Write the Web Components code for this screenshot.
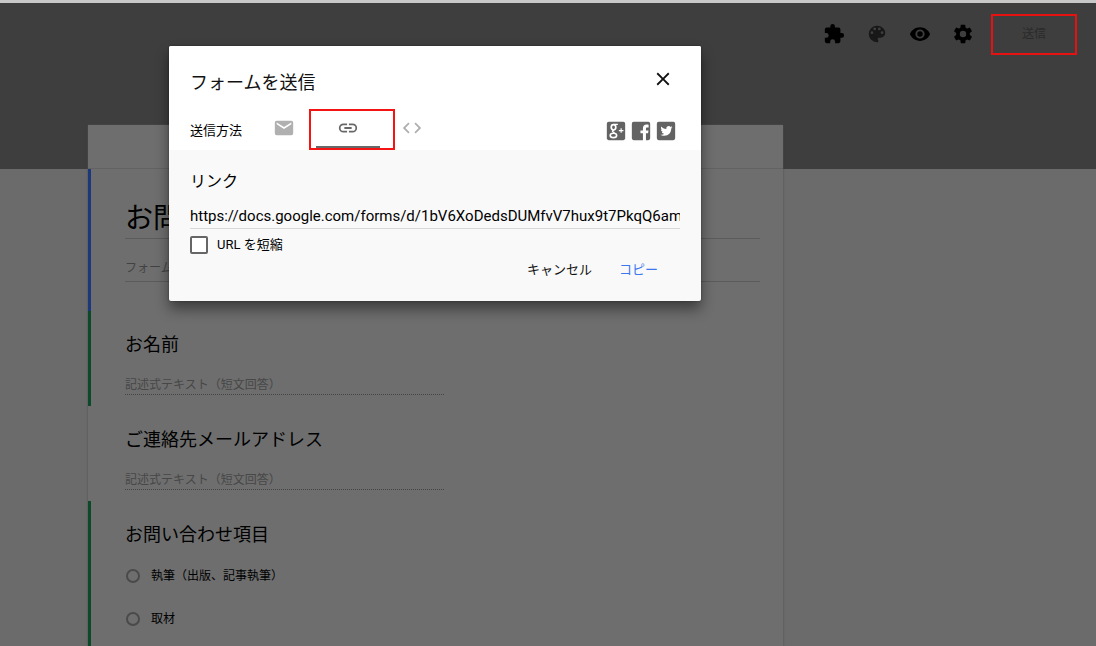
<!DOCTYPE html>
<html lang="ja">
<head>
<meta charset="utf-8">
<meta name="viewport" content="width=device-width, initial-scale=1">
<title>フォームを送信</title>
<style>
html, body { margin: 0; height: 100%; }
body { background: #6b6b6b; color: #000; font: 13px/20px Roboto, "Noto Sans CJK JP", sans-serif; overflow: hidden; }
</style>
</head>
<body>
<form-app></form-app>
<script>
const ICONS = {
  extension: '<path d="M20.5 11H19V7a2 2 0 0 0-2-2h-4V3.500a2.500 2.500 0 0 0-5 0V5H4a2 2 0 0 0-2 2v3.800h1.500a2.700 2.700 0 0 1 0 5.400H2V20a2 2 0 0 0 2 2h3.800v-1.500a2.700 2.700 0 0 1 5.400 0V22H17a2 2 0 0 0 2-2v-4h1.500a2.500 2.500 0 0 0 0-5z"/>',
  palette: '<path d="M12 3a9 9 0 0 0 0 18c.83 0 1.500-.67 1.500-1.500 0-.39-.15-.74-.39-1.010-.23-.26-.38-.61-.38-.99 0-.83.67-1.500 1.500-1.500H16a5 5 0 0 0 5-5c0-4.420-4.030-8-9-8zm-5.500 9a1.500 1.500 0 1 1 0-3 1.500 1.500 0 0 1 0 3zm3-4a1.500 1.500 0 1 1 0-3 1.500 1.500 0 0 1 0 3zm5 0a1.500 1.500 0 1 1 0-3 1.500 1.500 0 0 1 0 3zm3 4a1.500 1.500 0 1 1 0-3 1.500 1.500 0 0 1 0 3z"/>',
  eye: '<path d="M12 4.500C7 4.500 2.730 7.610 1 12c1.730 4.390 6 7.500 11 7.500s9.270-3.110 11-7.500c-1.730-4.390-6-7.500-11-7.500zM12 17a5 5 0 1 1 0-10 5 5 0 0 1 0 10zm0-8a3 3 0 1 0 0 6 3 3 0 0 0 0-6z"/>',
  gear: '<path d="M19.430 12.980c.04-.32.07-.64.07-.98s-.03-.66-.07-.98l2.110-1.650c.19-.15.24-.42.12-.64l-2-3.460c-.12-.22-.39-.3-.61-.22l-2.490 1c-.52-.4-1.080-.73-1.690-.98l-.38-2.650A.488.488 0 0 0 14 2h-4c-.25 0-.46.18-.49.42l-.38 2.650c-.61.25-1.170.59-1.690.98l-2.490-1c-.23-.09-.49 0-.61.22l-2 3.460c-.13.22-.07.49.12.64l2.110 1.650c-.04.32-.07.65-.07.98s.03.66.07.98l-2.110 1.650c-.19.15-.24.42-.12.64l2 3.460c.12.22.39.3.61.22l2.490-1c.52.4 1.080.73 1.690.98l.38 2.650c.03.24.24.42.49.42h4c.25 0 .46-.18.49-.42l.38-2.650c.61-.25 1.170-.59 1.690-.98l2.490 1c.23.09.49 0 .61-.22l2-3.460c.12-.22.07-.49-.12-.64l-2.110-1.650zM12 15.500a3.500 3.500 0 1 1 0-7 3.500 3.500 0 0 1 0 7z"/>',
  close: '<path d="M19 6.410 17.590 5 12 10.590 6.410 5 5 6.410 10.590 12 5 17.590 6.410 19 12 13.410 17.590 19 19 17.590 13.410 12z"/>',
  mail: '<path d="M20 4H4a2 2 0 0 0-2 2v12a2 2 0 0 0 2 2h16a2 2 0 0 0 2-2V6a2 2 0 0 0-2-2zm0 4-8 5-8-5V6l8 5 8-5v2z"/>',
  link: '<path d="M3.900 12A3.100 3.100 0 0 1 7 8.900h4V7H7a5 5 0 0 0 0 10h4v-1.900H7A3.100 3.100 0 0 1 3.900 12zM8 13h8v-2H8v2zm9-6h-4v1.900h4a3.100 3.100 0 0 1 0 6.200h-4V17h4a5 5 0 0 0 0-10z"/>',
  code: '<path d="M9.400 16.600 4.800 12l4.600-4.600L8 6l-6 6 6 6 1.400-1.400zm5.200 0 4.600-4.600-4.600-4.600L16 6l6 6-6 6-1.400-1.400z"/>',
  gplus: '<rect x="2" y="2" width="20" height="20" rx="2"/><g fill="none" stroke="#fff"><ellipse cx="9.300" cy="8" rx="2.500" ry="2.900" stroke-width="1.800"/><path d="M9.500 4.800h4.500M9.600 11c-2.400 1-1.400 2 .8 2.900" stroke-width="1.500"/><ellipse cx="9.200" cy="16.800" rx="3.500" ry="2.400" stroke-width="1.800"/><path d="M17.600 9v5M15.100 11.500h5" stroke-width="1.300"/></g>',
  facebook: '<path d="M4 2h16a2 2 0 0 1 2 2v16a2 2 0 0 1-2 2h-2.600v-7.500h2.300l.5-3.100h-2.800V9.500c0-.9.4-1.300 1.400-1.300h1.500V5.100c-.6-.1-1.400-.2-2.200-.2-2.500 0-4 1.400-4 4.100v2.400h-2.700v3.100h2.700V22H4a2 2 0 0 1-2-2V4a2 2 0 0 1 2-2z"/>',
  twitter: '<path d="M17.710 9.330C17.640 13.950 14.690 17.110 10.280 17.310 8.460 17.390 7.150 16.810 6 16.080c1.340.21 3-.32 3.900-1.080-1.320-.14-2.090-.81-2.460-1.880.38.06.78.04 1.140-.03-1.190-.4-2.040-1.140-2.080-2.680.33.16.68.3 1.140.33-.89-.51-1.540-2.360-.79-3.580 1.320 1.450 2.910 2.630 5.520 2.790-.66-2.800 3.050-4.320 4.600-2.450.66-.12 1.190-.36 1.710-.64-.21.64-.62 1.110-1.120 1.470.54-.07 1.030-.2 1.440-.41-.25.53-.81 1.010-1.290 1.410zM20 2H4a2 2 0 0 0-2 2v16a2 2 0 0 0 2 2h16a2 2 0 0 0 2-2V4a2 2 0 0 0-2-2z"/>'
};

function define(name, html, setup) {
  const template = document.createElement('template');
  template.innerHTML = html;
  customElements.define(name, class extends HTMLElement {
    connectedCallback() {
      if (this.shadowRoot) return;
      this.attachShadow({ mode: 'open' }).append(template.content.cloneNode(true));
      if (setup) setup(this, this.shadowRoot);
    }
  });
}

define('ui-icon', `
<style>
:host { display: block; width: 22px; height: 22px; flex: none; }
svg { display: block; width: 100%; height: 100%; fill: currentColor; }
</style>
<svg viewBox="0 0 24 24" aria-hidden="true"></svg>`,
(el, root) => { root.querySelector('svg').innerHTML = ICONS[el.getAttribute('name')]; });

define('icon-button', `
<style>
:host { display: block; }
button { display: block; margin: 0; padding: 0; border: 0; background: none; color: inherit; }
</style>
<button type="button"><slot></slot></button>`,
(el, root) => root.querySelector('button').setAttribute('aria-label', el.getAttribute('label')));

define('app-header', `
<style>
:host { display: block; box-sizing: border-box; height: 125px; background: #3e3e3e; border-top: 3px solid #c8c8c8; color: #000; }
nav { display: flex; justify-content: flex-end; align-items: flex-start; gap: 21px; padding: 11px 19px 0 0; }
icon-button { padding-top: 9px; }
.palette { color: #181818; }
.send { box-sizing: border-box; width: 86px; height: 41px; margin-left: -4px; padding: 0 0 2px; border: 2px solid #e61212; background: none; color: #2a2a2a; font: 12px/20px Roboto, "Noto Sans CJK JP", sans-serif; }
</style>
<nav>
  <icon-button label="アドオン"><ui-icon name="extension"></ui-icon></icon-button>
  <icon-button class="palette" label="カラーパレット"><ui-icon name="palette"></ui-icon></icon-button>
  <icon-button label="プレビュー"><ui-icon name="eye"></ui-icon></icon-button>
  <icon-button label="設定"><ui-icon name="gear"></ui-icon></icon-button>
  <button class="send" type="button">送信</button>
</nav>`);

define('form-section', `
<style>
:host { display: block; box-sizing: border-box; padding: 20px 23px 0 34px; border-left: 3px solid transparent; }
:host([accent="blue"]) { border-color: #1b387e; }
:host([accent="green"]) { border-color: #0b4a28; }
</style>
<slot></slot>`);

define('form-question', `
<style>
:host { display: block; }
h2 { margin: 0; font-weight: 400; font-size: 18px; line-height: 28px; }
</style>
<h2></h2><slot></slot>`,
(el, root) => { root.querySelector('h2').textContent = el.getAttribute('heading'); });

define('short-answer', `
<style>
:host { display: block; max-width: 319px; margin-top: 16px; }
input { display: block; box-sizing: border-box; width: 100%; height: 20px; margin: 0; padding: 1px 0 0; border: 0; border-bottom: 1px dotted #444; background: none; font: 12px/18px Roboto, "Noto Sans CJK JP", sans-serif; }
input::placeholder { color: #474747; opacity: 1; }
</style>
<input type="text" readonly aria-label="回答" placeholder="記述式テキスト（短文回答）">`);

define('choice-option', `
<style>
:host { display: block; }
label { display: flex; align-items: center; gap: 11px; font-size: 12px; line-height: 20px; }
input { appearance: none; box-sizing: border-box; width: 14px; height: 14px; margin: 0; border: 2px solid #4a4a4a; border-radius: 50%; }
</style>
<label><input type="radio"><span><slot></slot></span></label>`);

define('form-sheet', `
<style>
:host { display: flex; flex: 1; min-height: 0; flex-direction: column; padding: 0 225px 0 0; background: linear-gradient(#3e3e3e 44px, #6b6b6b 44px); }
main { display: flex; flex: 1; flex-direction: column; box-sizing: border-box; width: 100%; max-width: 695px; margin: 0 auto; background: #6e6e6e; box-shadow: 0 0 2px #505050; }
.bar { height: 43px; border-bottom: 1px solid #626262; }
.intro { height: 142px; }
.question { height: 95px; }
.rest { flex: 1; }
.title, .description { display: block; box-sizing: border-box; width: 100%; margin: 0; padding: 0; border: 0; border-bottom: 1px solid #5b5b5b; background: none; }
.title { height: 50px; color: #000; font: 28px/40px Roboto, "Noto Sans CJK JP", sans-serif; padding-top: 4px; }
.description { height: 43px; padding-top: 20px; padding-bottom: 4px; font: 12px/18px Roboto, "Noto Sans CJK JP", sans-serif; }
.description::placeholder { color: #424242; opacity: 1; }
.choices { display: grid; gap: 23px; margin-top: 17px; padding-left: 1px; }
</style>
<main>
  <div class="bar"></div>
  <form-section class="intro" accent="blue">
    <input class="title" aria-label="フォームのタイトル" value="お問い合わせ">
    <input class="description" aria-label="フォームの説明" placeholder="フォームの説明">
  </form-section>
  <form-section class="question" accent="green">
    <form-question heading="お名前"><short-answer></short-answer></form-question>
  </form-section>
  <form-section class="question">
    <form-question heading="ご連絡先メールアドレス"><short-answer></short-answer></form-question>
  </form-section>
  <form-section class="rest" accent="green">
    <form-question heading="お問い合わせ項目">
      <div class="choices">
        <choice-option>執筆（出版、記事執筆）</choice-option>
        <choice-option>取材</choice-option>
      </div>
    </form-question>
  </form-section>
</main>`);

define('send-tab', `
<style>
:host { display: block; position: relative; width: 64px; color: #b0b0b0; }
button { display: flex; justify-content: center; box-sizing: border-box; width: 100%; height: 39px; margin: 0; padding: 8px 0 0; border: 0; border-bottom: 2px solid transparent; background: none; color: inherit; }
:host([selected]) { color: #686868; }
:host([selected]) button { border-color: #686868; }
:host([selected])::after { content: ""; position: absolute; inset: 0 -15px -2px -7px; border: 2px solid #f51414; pointer-events: none; }
</style>
<button type="button" role="tab"><slot></slot></button>`,
(el, root) => {
  const button = root.querySelector('button');
  button.setAttribute('aria-label', el.getAttribute('label'));
  button.setAttribute('aria-selected', el.hasAttribute('selected'));
});

define('share-links', `
<style>
:host { display: flex; gap: 3px; color: #636363; }
a { display: block; color: inherit; }
</style>
<a href="#google" aria-label="Google+"><ui-icon name="gplus"></ui-icon></a>
<a href="#facebook" aria-label="Facebook"><ui-icon name="facebook"></ui-icon></a>
<a href="#twitter" aria-label="Twitter"><ui-icon name="twitter"></ui-icon></a>`);

define('send-dialog', `
<style>
:host { position: absolute; inset: 0; display: flex; justify-content: center; align-items: flex-start; padding: 46px 226px 0 0; }
section { box-sizing: border-box; width: 100%; max-width: 532px; background: #f9f9f9; border-radius: 2px; box-shadow: 0 8px 14px rgba(0,0,0,.45), 0 0 2px rgba(0,0,0,.4); }
header { padding: 22px 21px 0; background: #fff; border-radius: 2px 2px 0 0; }
.top { display: flex; justify-content: space-between; align-items: flex-start; height: 41px; padding-right: 6px; color: #111; }
h1 { margin: 0; font-weight: 400; font-size: 18px; line-height: 30px; }
.methods { display: flex; align-items: flex-start; height: 41px; }
.caption { width: 62px; padding-top: 12px; line-height: 20px; }
.tabs { display: flex; }
share-links { margin: 11px 3px 0 auto; }
.body { padding: 20px 21px; }
h2 { margin: 0; font-weight: 400; font-size: 16px; line-height: 24px; }
.url { display: block; box-sizing: border-box; width: 100%; height: 25px; margin: 10px 0 0; padding: 0; border: 0; border-bottom: 1px solid #d8d8d8; background: none; color: #000; font: 15px/24px Roboto, sans-serif; }
.shorten { display: flex; align-items: center; gap: 9px; width: max-content; margin-top: 6px; line-height: 20px; }
.shorten input { appearance: none; box-sizing: border-box; width: 18px; height: 18px; margin: 0; border: 2px solid #666; border-radius: 2px; background: #fff; }
.actions { display: flex; justify-content: flex-end; gap: 27px; margin-top: 4px; padding-right: 22px; }
.actions button { margin: 0; padding: 0; border: 0; background: none; color: #111; font: 13px/22px Roboto, "Noto Sans CJK JP", sans-serif; }
.actions .copy { color: #3b78f0; }
</style>
<section role="dialog" aria-labelledby="heading">
  <header>
    <div class="top">
      <h1 id="heading">フォームを送信</h1>
      <icon-button label="閉じる"><ui-icon name="close"></ui-icon></icon-button>
    </div>
    <div class="methods">
      <span class="caption">送信方法</span>
      <div class="tabs" role="tablist">
        <send-tab label="メール"><ui-icon name="mail"></ui-icon></send-tab>
        <send-tab label="リンク" selected><ui-icon name="link"></ui-icon></send-tab>
        <send-tab label="埋め込み"><ui-icon name="code"></ui-icon></send-tab>
      </div>
      <share-links></share-links>
    </div>
  </header>
  <div class="body">
    <h2>リンク</h2>
    <input class="url" type="text" readonly aria-label="リンク" value="https://docs.google.com/forms/d/1bV6XoDedsDUMfvV7hux9t7PkqQ6amM4">
    <label class="shorten"><input type="checkbox"><span>URL を短縮</span></label>
    <div class="actions">
      <button type="button">キャンセル</button>
      <button class="copy" type="button">コピー</button>
    </div>
  </div>
</section>`);

define('form-app', `
<style>
:host { display: flex; flex-direction: column; position: relative; min-height: 100vh; }
</style>
<app-header></app-header>
<form-sheet></form-sheet>
<send-dialog></send-dialog>`);
</script>
</body>
</html>
